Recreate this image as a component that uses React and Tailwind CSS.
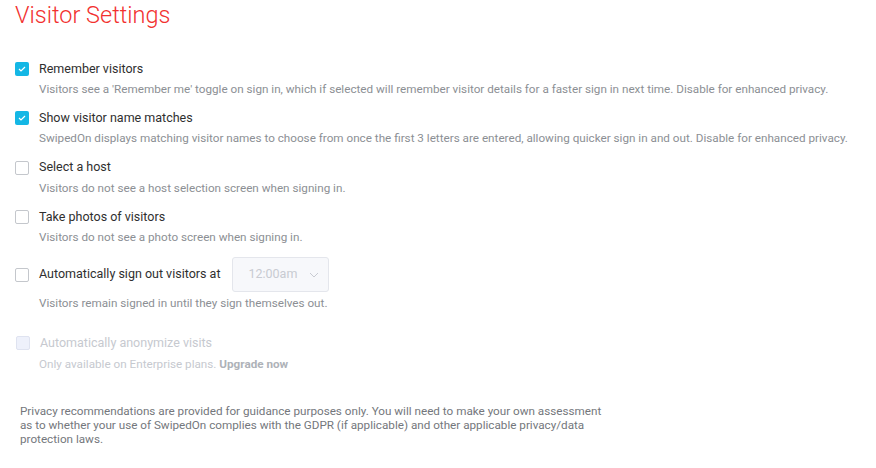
import React from "react";

const items = [
  {
    label: "Remember visitors",
    desc: "Visitors see a 'Remember me' toggle on sign in, which if selected will remember visitor details for a faster sign in next time. Disable for enhanced privacy.",
    checked: true,
  },
  {
    label: "Show visitor name matches",
    desc: "SwipedOn displays matching visitor names to choose from once the first 3 letters are entered, allowing quicker sign in and out. Disable for enhanced privacy.",
    checked: true,
  },
  {
    label: "Select a host",
    desc: "Visitors do not see a host selection screen when signing in.",
    checked: false,
  },
  {
    label: "Take photos of visitors",
    desc: "Visitors do not see a photo screen when signing in.",
    checked: false,
  },
];

const Box = ({ checked, disabled }) => {
  if (checked) {
    return (
      <div className="w-[14px] h-[14px] rounded-[2px] bg-[#14b7e5] flex items-center justify-center shrink-0">
        <svg width="8" height="6" viewBox="0 0 8 6" fill="none">
          <path d="M1 3l2 2 4-4" stroke="white" strokeWidth="1.2" />
        </svg>
      </div>
    );
  }
  if (disabled) {
    return <div className="w-[14px] h-[14px] rounded-[2px] border border-[#dfe3f0] bg-[#eef1fb] shrink-0" />;
  }
  return <div className="w-[14px] h-[14px] rounded-[2px] border border-[#c4c7cc] bg-white shrink-0" />;
};

export default function App() {
  return (
    <div className="w-[876px] h-[468px] bg-white overflow-hidden font-['Roboto',sans-serif]">
      <h1 className="pl-[15px] pt-[1px] text-[23.5px] leading-[28px] font-light text-[#f2312f]">
        Visitor Settings
      </h1>

      <div className="pl-[15px] mt-[33px]">
        {items.map((it) => (
          <div key={it.label} className="h-[49.3px]">
            <div className="flex items-center gap-[10px] h-[14px]">
              <Box checked={it.checked} />
              <span className="text-[12.5px] text-[#2f2f2f]">{it.label}</span>
            </div>
            <div className="pl-[24px] mt-[6px] text-[11.7px] leading-[14px] text-[#8c8f94]">
              {it.desc}
            </div>
          </div>
        ))}

        <div className="flex items-center h-[35px] mt-[-2px]">
          <div className="flex items-center gap-[10px]">
            <Box />
            <span className="text-[12.5px] text-[#2f2f2f]">Automatically sign out visitors at</span>
          </div>
          <div className="ml-[12px] w-[97px] h-[35px] rounded-[3px] border border-[#e4e6ec] bg-[#f7f8fb] flex items-center justify-between pl-[15px] pr-[9px]">
            <span className="text-[12.5px] text-[#c8cbd2]">12:00am</span>
            <svg width="10" height="6" viewBox="0 0 10 6" fill="none">
              <path d="M1 1l4 4 4-4" stroke="#c8cbd2" strokeWidth="1" />
            </svg>
          </div>
        </div>
        <div className="pl-[24px] mt-[4px] text-[11.7px] leading-[14px] text-[#8c8f94]">
          Visitors remain signed in until they sign themselves out.
        </div>

        <div className="mt-[26px] flex items-center gap-[10px] h-[14px] pl-[1px]">
          <Box disabled />
          <span className="text-[12.5px] text-[#c6c9cf]">Automatically anonymize visits</span>
        </div>
        <div className="pl-[24px] mt-[7px] text-[11.7px] leading-[14px] text-[#c6c9cf]">
          Only available on Enterprise plans. <span className="font-bold text-[#aeb2b8]">Upgrade now</span>
        </div>
      </div>

      <p className="ml-[20px] mt-[33px] w-[590px] text-[11.7px] leading-[14px] text-[#74777c]">
        Privacy recommendations are provided for guidance purposes only. You will need to make your own assessment as to whether your use of SwipedOn complies with the GDPR (if applicable) and other applicable privacy/data protection laws.
      </p>
    </div>
  );
}
